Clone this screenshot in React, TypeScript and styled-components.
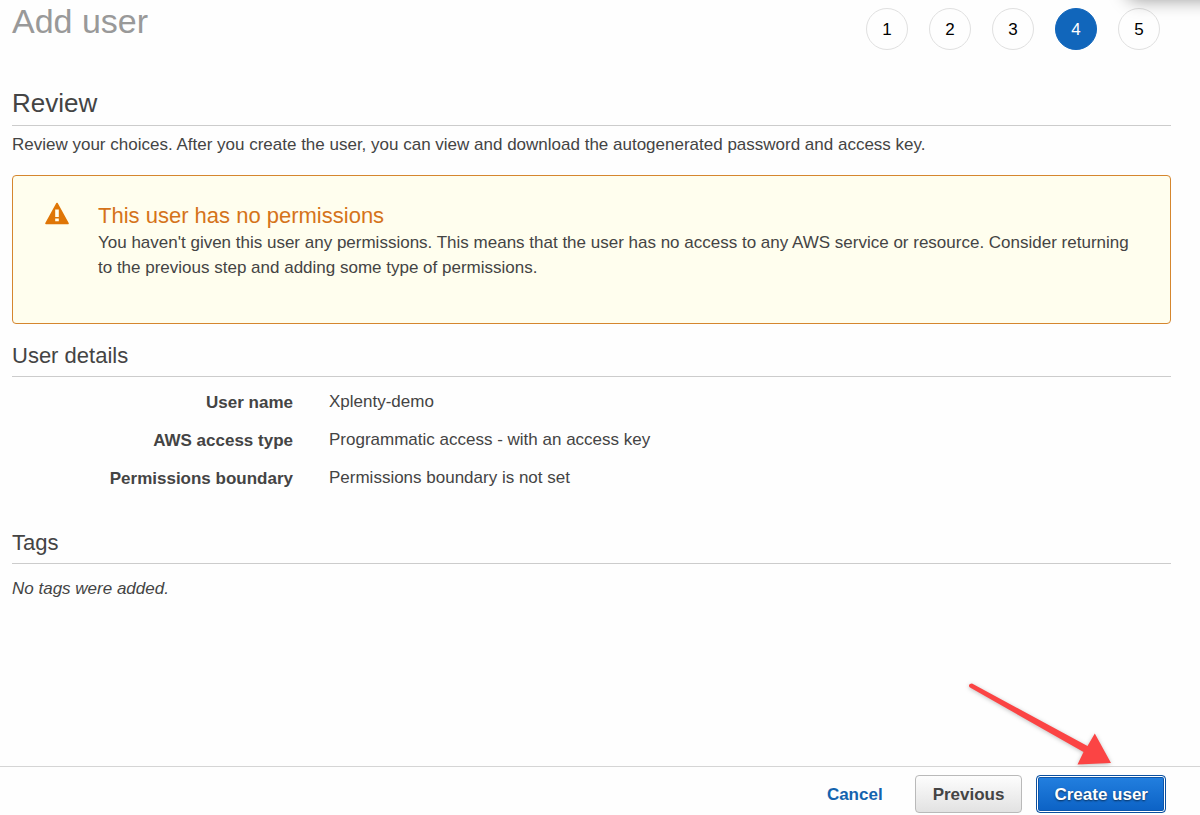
import React from "react";
import styled, { createGlobalStyle, css } from "styled-components";

const GlobalStyle = createGlobalStyle`
  *, *::before, *::after { box-sizing: border-box; }
  body {
    margin: 0;
    background: #fefefe;
    color: #444;
    font: 17px/25px "Liberation Sans", Arial, Helvetica, sans-serif;
  }
  h1, h2, h3, p, ol, dl, dd { margin: 0; padding: 0; }
`;

const Page = styled.div`
  position: relative;
  display: flex;
  flex-direction: column;
  min-height: 100vh;
  overflow: hidden;
`;

const CornerShadow = styled.div`
  position: absolute;
  top: -24px;
  right: -40px;
  width: 110px;
  height: 20px;
  border-radius: 8px;
  box-shadow: 0 0 18px 4px rgba(0, 0, 0, 0.4);
`;

const Header = styled.header`
  display: flex;
  justify-content: space-between;
  align-items: flex-start;
  padding: 0 40px 0 12px;
`;

const Title = styled.h1`
  color: #999;
  font-size: 34px;
  font-weight: 400;
  line-height: 42px;
`;

const Steps = styled.ol`
  display: flex;
  gap: 21px;
  padding-top: 8px;
  list-style: none;
`;

const Step = styled.li<{ $current?: boolean }>`
  display: grid;
  place-items: center;
  width: 42px;
  height: 42px;
  border: 1px solid ${(p) => (p.$current ? "#1166bb" : "#e0e0e0")};
  border-radius: 50%;
  background: ${(p) => (p.$current ? "#1166bb" : "transparent")};
  color: ${(p) => (p.$current ? "#fff" : "#000")};
`;

const Main = styled.main`
  flex: 1;
  padding: 37px 29px 24px 12px;
`;

const PageHeading = styled.h2`
  padding-bottom: 6px;
  border-bottom: 1px solid #ccc;
  font-size: 26px;
  font-weight: 400;
  line-height: 32px;
`;

const Intro = styled.p`
  padding: 6px 0 18px;
`;

const Alert = styled.section`
  display: flex;
  align-items: flex-start;
  gap: 29px;
  padding: 26px 32px 43px;
  border: 1px solid #d5862e;
  border-radius: 4px;
  background: #fffeee;
`;

const WarningIcon = styled.svg`
  flex: none;
  width: 24px;
  height: 24px;
`;

const AlertTitle = styled.h3`
  color: #d5731a;
  font-size: 22px;
  font-weight: 400;
  line-height: 28px;
`;

const Section = styled.section`
  padding-top: 18px;
`;

const SectionHeading = styled.h3`
  padding-bottom: 6px;
  border-bottom: 1px solid #ccc;
  font-size: 22px;
  font-weight: 400;
  line-height: 28px;
`;

const Details = styled.dl`
  display: grid;
  grid-template-columns: 281px 1fr;
  gap: 12px 36px;
  padding: 12px 0 20px;
`;

const Term = styled.dt`
  padding-top: 1px;
  font-weight: 700;
  text-align: right;
`;

const EmptyNote = styled.p`
  padding-top: 12px;
  font-style: italic;
`;

const Footer = styled.footer`
  position: relative;
  display: flex;
  justify-content: flex-end;
  align-items: center;
  padding: 8px 34px 2px 12px;
  border-top: 1px solid #d5d5d5;
`;

const buttonBase = css`
  height: 38px;
  border-radius: 4px;
  font: 700 17px/25px "Liberation Sans", Arial, Helvetica, sans-serif;
  cursor: pointer;
`;

const LinkButton = styled.button`
  ${buttonBase}
  padding: 0 12px;
  margin-right: 20px;
  border: 0;
  background: none;
  color: #1463ae;
`;

const SecondaryButton = styled.button`
  ${buttonBase}
  padding: 0 17px;
  margin-right: 14px;
  border: 1px solid #b9b9b9;
  background: linear-gradient(#fdfdfd, #e2e2e2);
  color: #444;
`;

const PrimaryButton = styled.button`
  ${buttonBase}
  padding: 0 17px;
  border: 1px solid #0b4f9e;
  background: linear-gradient(#2380e0, #0b61c4);
  box-shadow: inset 0 0 0 1px #fff, inset 0 0 0 2px #0b56ac;
  color: #fff;
  text-shadow: 0 1px 2px rgba(0, 0, 0, 0.6);
`;

const Arrow = styled.svg`
  position: absolute;
  right: 82px;
  bottom: 42px;
  width: 154px;
  height: 94px;
  pointer-events: none;
  filter: drop-shadow(0 1px 2px rgba(0, 0, 0, 0.25));
`;

const steps = [1, 2, 3, 4, 5];
const currentStep = 4;

const details = [
  ["User name", "Xplenty-demo"],
  ["AWS access type", "Programmatic access - with an access key"],
  ["Permissions boundary", "Permissions boundary is not set"],
];

export default function App() {
  return (
    <>
      <GlobalStyle />
      <Page>
        <CornerShadow />
        <Header>
          <Title>Add user</Title>
          <Steps>
            {steps.map((n) => (
              <Step
                key={n}
                $current={n === currentStep}
                aria-current={n === currentStep ? "step" : undefined}
              >
                {n}
              </Step>
            ))}
          </Steps>
        </Header>
        <Main>
          <PageHeading>Review</PageHeading>
          <Intro>
            Review your choices. After you create the user, you can view and
            download the autogenerated password and access key.
          </Intro>
          <Alert>
            <WarningIcon viewBox="0 0 24 24" aria-hidden="true">
              <path
                d="M12 1.5 23 21.500H1Z"
                fill="#df7607"
                stroke="#df7607"
                strokeWidth="1.6"
                strokeLinejoin="round"
              />
              <path d="M10.2 7.5h3.6v7.5h-3.6zM10.2 16.5h3.6v2.8h-3.6z" fill="#fffeee" />
            </WarningIcon>
            <div>
              <AlertTitle>This user has no permissions</AlertTitle>
              <p>
                You haven't given this user any permissions. This means that the
                user has no access to any AWS service or resource. Consider
                returning to the previous step and adding some type of
                permissions.
              </p>
            </div>
          </Alert>
          <Section>
            <SectionHeading>User details</SectionHeading>
            <Details>
              {details.map(([term, value]) => (
                <React.Fragment key={term}>
                  <Term>{term}</Term>
                  <dd>{value}</dd>
                </React.Fragment>
              ))}
            </Details>
          </Section>
          <Section>
            <SectionHeading>Tags</SectionHeading>
            <EmptyNote>No tags were added.</EmptyNote>
          </Section>
        </Main>
        <Footer>
          <LinkButton type="button">Cancel</LinkButton>
          <SecondaryButton type="button">Previous</SecondaryButton>
          <PrimaryButton type="button">Create user</PrimaryButton>
          <Arrow viewBox="0 0 154 94" aria-hidden="true">
            <path
              d="M8 4.500C5 4.500 4 7 6 8.600L119.500 73 113.500 85.500 147 84 130.800 54.500 123.500 67Z"
              fill="#fb4444"
            />
          </Arrow>
        </Footer>
      </Page>
    </>
  );
}
